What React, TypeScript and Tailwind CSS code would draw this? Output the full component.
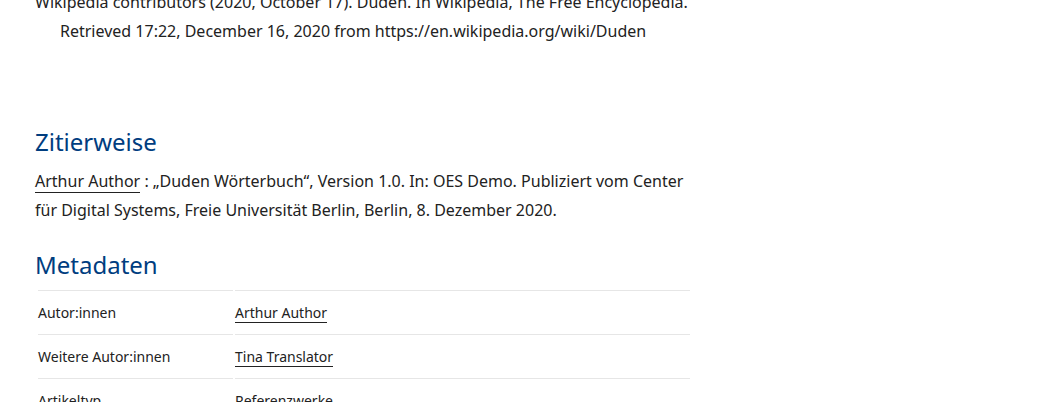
export default function App() {
  return (
    <div className="h-[402px] overflow-hidden bg-white font-['Noto_Sans',sans-serif] text-[#222]">
      <div className="w-[700px] pl-[35px]">
        <p className="-mt-[12px] w-[655px] pl-[25px] -indent-[25px] text-[16px] leading-[29px]">
          Wikipedia contributors (2020, October 17). Duden. In Wikipedia, The Free Encyclopedia. Retrieved 17:22,
          December 16, 2020 from https://en.wikipedia.org/wiki/Duden
        </p>

        <h2 className="mt-[80px] text-[24px] leading-[32px] text-[#003d7f]">Zitierweise</h2>
        <p className="mt-[9px] w-[655px] text-[16px] leading-[29px]">
          <a className="border-b border-[#222]">Arthur Author</a> : „Duden Wörterbuch“, Version 1.0. In: OES Demo.
          Publiziert vom Center für Digital Systems, Freie Universität Berlin, Berlin, 8. Dezember 2020.
        </p>

        <h2 className="mt-[24px] text-[24px] leading-[32px] text-[#003d7f]">Metadaten</h2>
        <table className="ml-[1px] mt-[9px] w-[656px] border-separate [border-spacing:2px_0] text-[14px]">
          <tbody>
            {[
              ['Autor:innen', 'Arthur Author', true],
              ['Weitere Autor:innen', 'Tina Translator', true],
              ['Artikeltyp', 'Referenzwerke', false],
            ].map(([k, v, link]) => (
              <tr key={k as string}>
                <td className="h-[44px] w-[195px] border-t border-[#e6e6e6] align-middle">{k}</td>
                <td className="h-[44px] border-t border-[#e6e6e6] align-middle">
                  {link ? <a className="border-b border-[#222]">{v}</a> : v}
                </td>
              </tr>
            ))}
          </tbody>
        </table>
      </div>
    </div>
  )
}
